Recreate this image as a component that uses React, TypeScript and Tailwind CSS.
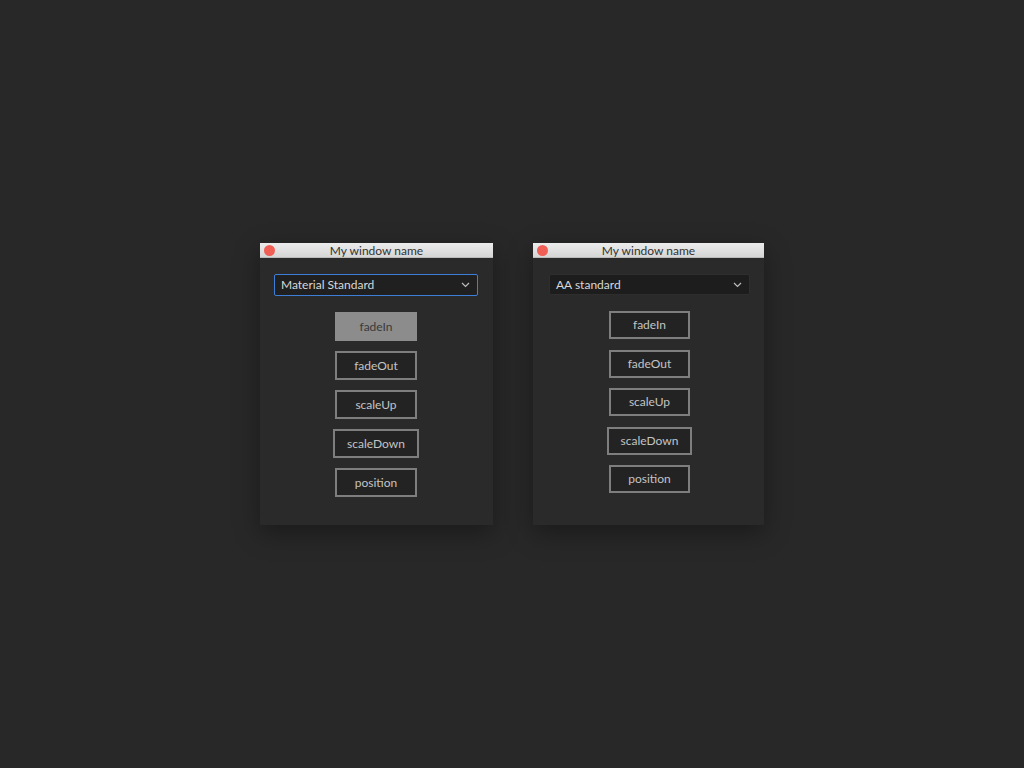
import React from 'react';

// Floating panel with mac style title bar
const actions = ['fadeIn', 'fadeOut', 'scaleUp', 'scaleDown', 'position'];

const Chevron = () => (
  <svg width="9" height="6" viewBox="0 0 9 6" fill="none">
    <path d="M1 1l3.5 3.5L8 1" stroke="#bdbdbd" strokeWidth="1.2" />
  </svg>
);

type PanelProps = {
  width: string;
  label: string;
  focused?: boolean;
  active?: string;
  compact?: boolean;
};

const Panel: React.FC<PanelProps> = ({ width, label, focused, active, compact }) => (
  <div className={`${width} bg-[#2a2a2a] shadow-[0_8px_24px_rgba(0,0,0,0.35)] flex flex-col`}>
    {/* Title bar */}
    <div className="relative h-[15px] bg-gradient-to-b from-[#ececec] to-[#d6d6d6] border-b border-[#bcbcbc] flex items-center justify-center">
      <span className="absolute left-[4px] top-[2px] w-[11px] h-[11px] rounded-full bg-[#ef5f56]" />
      <span className="text-[12px] leading-none text-[#333333] pt-[1px]">My window name</span>
    </div>

    <div className={compact ? 'flex flex-col items-center pt-[16px] pb-[32px] pl-[16px] pr-[14px]' : 'flex flex-col items-center pt-[16px] pb-[28px] pl-[14px] pr-[15px]'}>
      {/* Dropdown */}
      <div
        className={
          focused
            ? 'w-full h-[22px] rounded-[2px] border border-[#3d7fd8] bg-[#202020] flex items-center justify-between pl-[6px] pr-[7px]'
            : 'w-full h-[21px] rounded-[2px] border border-[#2e2e2e] bg-[#1d1d1d] flex items-center justify-between pl-[6px] pr-[7px]'
        }
      >
        <span className="text-[12px] leading-none text-[#d8d8d8]">{label}</span>
        <Chevron />
      </div>

      {/* Action buttons */}
      <div className={compact ? 'flex flex-col items-center gap-[10.5px] mt-[16px]' : 'flex flex-col items-center gap-[10px] mt-[16px]'}>
        {actions.map((a) => (
          <button
            key={a}
            className={
              a === active
                ? 'h-[29px] min-w-[82px] px-[12px] bg-[#8c8c8c] border-2 border-[#8c8c8c] text-[12px] text-[#3a3a3a]'
                : compact
                  ? 'h-[28px] min-w-[81px] px-[12px] bg-[#232323] border-2 border-[#7e7e7e] text-[12px] text-[#c4c4c4]'
                  : 'h-[29px] min-w-[82px] px-[12px] bg-[#232323] border-2 border-[#7e7e7e] text-[12px] text-[#c4c4c4]'
            }
          >
            {a}
          </button>
        ))}
      </div>
    </div>
  </div>
);

export default function App() {
  return (
    <div
      className="w-full h-screen bg-[#282828] flex items-center justify-center gap-[40px]"
      style={{ fontFamily: 'Lato, "Noto Sans", sans-serif' }}
    >
      <Panel width="w-[233px]" label="Material Standard" focused active="fadeIn" />
      <Panel width="w-[231px]" label="AA standard" compact />
    </div>
  );
}
